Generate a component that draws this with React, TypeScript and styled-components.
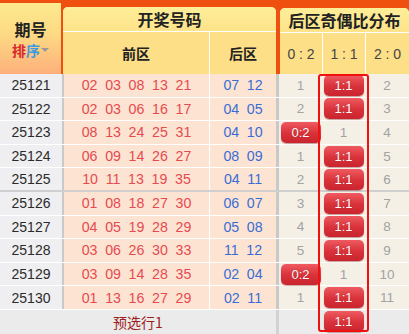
import React from 'react'
import styled, { createGlobalStyle } from 'styled-components'

type Cell = number | string
type Draw = { period: string; front: string[]; back: string[]; ratio: Cell[]; groupEnd?: boolean }

const draws: Draw[] = [
  { period: '25121', front: ['02', '03', '08', '13', '21'], back: ['07', '12'], ratio: [1, '1:1', 2] },
  { period: '25122', front: ['02', '03', '06', '16', '17'], back: ['04', '05'], ratio: [2, '1:1', 3] },
  { period: '25123', front: ['08', '13', '24', '25', '31'], back: ['04', '10'], ratio: ['0:2', 1, 4] },
  { period: '25124', front: ['06', '09', '14', '26', '27'], back: ['08', '09'], ratio: [1, '1:1', 5] },
  { period: '25125', front: ['10', '11', '13', '19', '35'], back: ['04', '11'], ratio: [2, '1:1', 6], groupEnd: true },
  { period: '25126', front: ['01', '08', '18', '27', '30'], back: ['06', '07'], ratio: [3, '1:1', 7] },
  { period: '25127', front: ['04', '05', '19', '28', '29'], back: ['05', '08'], ratio: [4, '1:1', 8] },
  { period: '25128', front: ['03', '06', '26', '30', '33'], back: ['11', '12'], ratio: [5, '1:1', 9] },
  { period: '25129', front: ['03', '09', '14', '28', '35'], back: ['02', '04'], ratio: ['0:2', 1, 10] },
  { period: '25130', front: ['01', '13', '16', '27', '29'], back: ['02', '11'], ratio: [1, '1:1', 11] }
]

const ratioWidths = [43, 43, 44]

const GlobalStyle = createGlobalStyle`
  html, body { margin: 0; padding: 0; background: #fff; }
  body { font-family: "Liberation Sans", "Noto Sans CJK SC", sans-serif; }
`

const Wrap = styled.div`
  width: 409px;
  height: 334px;
  overflow: hidden;
  background: #fff;
`

const Head = styled.div`
  display: flex;
  align-items: flex-end;
  height: 74px;
  background: #f0500f;
`

const HeadPeriod = styled.div`
  width: 61px;
  height: 71px;
  margin-right: 2px;
  background: linear-gradient(#fde98f, #fdd984 45%, #fdb07a);
  display: flex;
  flex-direction: column;
  align-items: center;
  justify-content: center;
  gap: 4px;
  font-family: "Noto Sans CJK SC", sans-serif;
  font-weight: 700;
`

const PeriodTitle = styled.div`
  height: 18px;
  font-size: 16px;
  line-height: 18px;
  color: #222;
`

const Sort = styled.div`
  display: flex;
  align-items: center;
  height: 16px;
  font-size: 14px;
  line-height: 16px;
`

const SortChar = styled.span<{ $c: string }>`
  color: ${p => p.$c};
`

const Caret = styled.span`
  width: 0;
  height: 0;
  margin-left: 1px;
  border-left: 4px solid transparent;
  border-right: 4px solid transparent;
  border-top: 4px solid #9a9a9a;
`

const HeadGroup = styled.div<{ $w: number; $h: number }>`
  width: ${p => p.$w}px;
  height: ${p => p.$h}px;
  border-radius: 5px 5px 0 0;
  overflow: hidden;
  display: flex;
  flex-direction: column;
  background: #fff;
  gap: 1px;
`

const GroupGap = styled.div`
  width: 4px;
`

const HeadTitle = styled.div`
  flex: 1;
  background: linear-gradient(#fdee98, #fde38a);
  display: flex;
  align-items: center;
  justify-content: center;
  font-family: "Noto Sans CJK SC", sans-serif;
  font-weight: 700;
  font-size: 16px;
  color: #222;
`

const HeadSubRow = styled.div`
  height: 44px;
  display: flex;
  gap: 1px;
`

const HeadSub = styled.div<{ $w: number; $bold?: boolean }>`
  width: ${p => p.$w}px;
  background: #fddf88;
  display: flex;
  align-items: center;
  justify-content: center;
  font-family: ${p => (p.$bold ? '"Noto Sans CJK SC", sans-serif' : '"Liberation Sans", sans-serif')};
  font-weight: ${p => (p.$bold ? 700 : 400)};
  font-size: 14px;
  color: ${p => (p.$bold ? '#222' : '#444')};
  white-space: pre;
`

const Body = styled.div`
  position: relative;
`

const BodyRow = styled.div<{ $sep?: boolean }>`
  display: flex;
  height: 23.6px;
  box-sizing: border-box;
  border-bottom: ${p => (p.$sep ? '2px solid #cfcfcf' : '1px solid #fff')};
`

const PeriodCell = styled.div`
  width: 64px;
  box-sizing: border-box;
  border-right: 2px solid #c9c9c9;
  background: #efeef0;
  display: flex;
  align-items: center;
  justify-content: center;
  font-size: 14px;
  color: #2b2b2b;
`

const BallCell = styled.div<{ $w: number; $line?: boolean }>`
  width: ${p => p.$w}px;
  box-sizing: border-box;
  border-left: ${p => (p.$line ? '1px solid #fff' : 'none')};
  background: #fde4d2;
  display: flex;
  align-items: center;
  justify-content: center;
  gap: 7.7px;
`

const Ball = styled.span<{ $blue?: boolean }>`
  font-size: 14.2px;
  color: ${p => (p.$blue ? '#3a6dd4' : '#e64a50')};
`

const RatioGroup = styled.div`
  display: flex;
  border-left: 3px solid #c9c9c9;
`

const RatioCell = styled.div<{ $w: number }>`
  width: ${p => p.$w}px;
  background: #f4f0e6;
  display: flex;
  align-items: center;
  justify-content: center;
  font-size: 13.5px;
  color: #a2a2a2;
`

const Badge = styled.span`
  width: 40px;
  height: 21px;
  border-radius: 5px;
  background: linear-gradient(#ef5a60, #d8313a 55%, #c9252e);
  box-shadow: 0 1px 1px rgba(120, 0, 0, 0.35);
  color: #fff;
  font-size: 13px;
  display: flex;
  align-items: center;
  justify-content: center;
  text-shadow: 0 0 1px rgba(120, 0, 0, 0.5);
`

const Footer = styled.div`
  display: flex;
  height: 24px;
  background: #ebebeb;
`

const FooterNote = styled.div`
  width: 276px;
  display: flex;
  align-items: center;
  justify-content: center;
  font-family: "Noto Sans CJK SC", sans-serif;
  font-size: 14px;
  color: #9c1c20;
`

const FooterRatio = styled.div`
  display: flex;
  border-left: 3px solid #d2d2d2;
`

const FooterCell = styled.div<{ $w: number }>`
  width: ${p => p.$w}px;
  display: flex;
  align-items: center;
  justify-content: center;
`

const Frame = styled.div`
  position: absolute;
  left: 318px;
  top: 0;
  width: 51px;
  bottom: 2px;
  box-sizing: border-box;
  border: 2px solid #f01010;
  border-radius: 3px;
  pointer-events: none;
`

const renderRatio = (cell: Cell) => (typeof cell === 'string' ? <Badge>{cell}</Badge> : cell)

const App: React.FC = () => (
  <Wrap>
    <GlobalStyle />
    <Head>
      <HeadPeriod>
        <PeriodTitle>期号</PeriodTitle>
        <Sort>
          <SortChar $c="#d8282e">排</SortChar>
          <SortChar $c="#3a9ae2">序</SortChar>
          <Caret />
        </Sort>
      </HeadPeriod>
      <HeadGroup $w={213} $h={67}>
        <HeadTitle>开奖号码</HeadTitle>
        <HeadSubRow>
          <HeadSub $w={146} $bold>
            前区
          </HeadSub>
          <HeadSub $w={66} $bold>
            后区
          </HeadSub>
        </HeadSubRow>
      </HeadGroup>
      <GroupGap />
      <HeadGroup $w={129} $h={66}>
        <HeadTitle>后区奇偶比分布</HeadTitle>
        <HeadSubRow>
          <HeadSub $w={42}>0 : 2</HeadSub>
          <HeadSub $w={42}>1 : 1</HeadSub>
          <HeadSub $w={43}>2 : 0</HeadSub>
        </HeadSubRow>
      </HeadGroup>
    </Head>
    <Body>
      {draws.map(d => (
        <BodyRow key={d.period} $sep={d.groupEnd}>
          <PeriodCell>{d.period}</PeriodCell>
          <BallCell $w={145}>
            {d.front.map((n, i) => (
              <Ball key={i}>{n}</Ball>
            ))}
          </BallCell>
          <BallCell $w={67} $line>
            {d.back.map((n, i) => (
              <Ball key={i} $blue>
                {n}
              </Ball>
            ))}
          </BallCell>
          <RatioGroup>
            {d.ratio.map((c, i) => (
              <RatioCell key={i} $w={ratioWidths[i]}>
                {renderRatio(c)}
              </RatioCell>
            ))}
          </RatioGroup>
        </BodyRow>
      ))}
      <Footer>
        <FooterNote>预选行1</FooterNote>
        <FooterRatio>
          <FooterCell $w={43} />
          <FooterCell $w={43}>
            <Badge>1:1</Badge>
          </FooterCell>
          <FooterCell $w={44} />
        </FooterRatio>
      </Footer>
      <Frame />
    </Body>
  </Wrap>
)

export default App
